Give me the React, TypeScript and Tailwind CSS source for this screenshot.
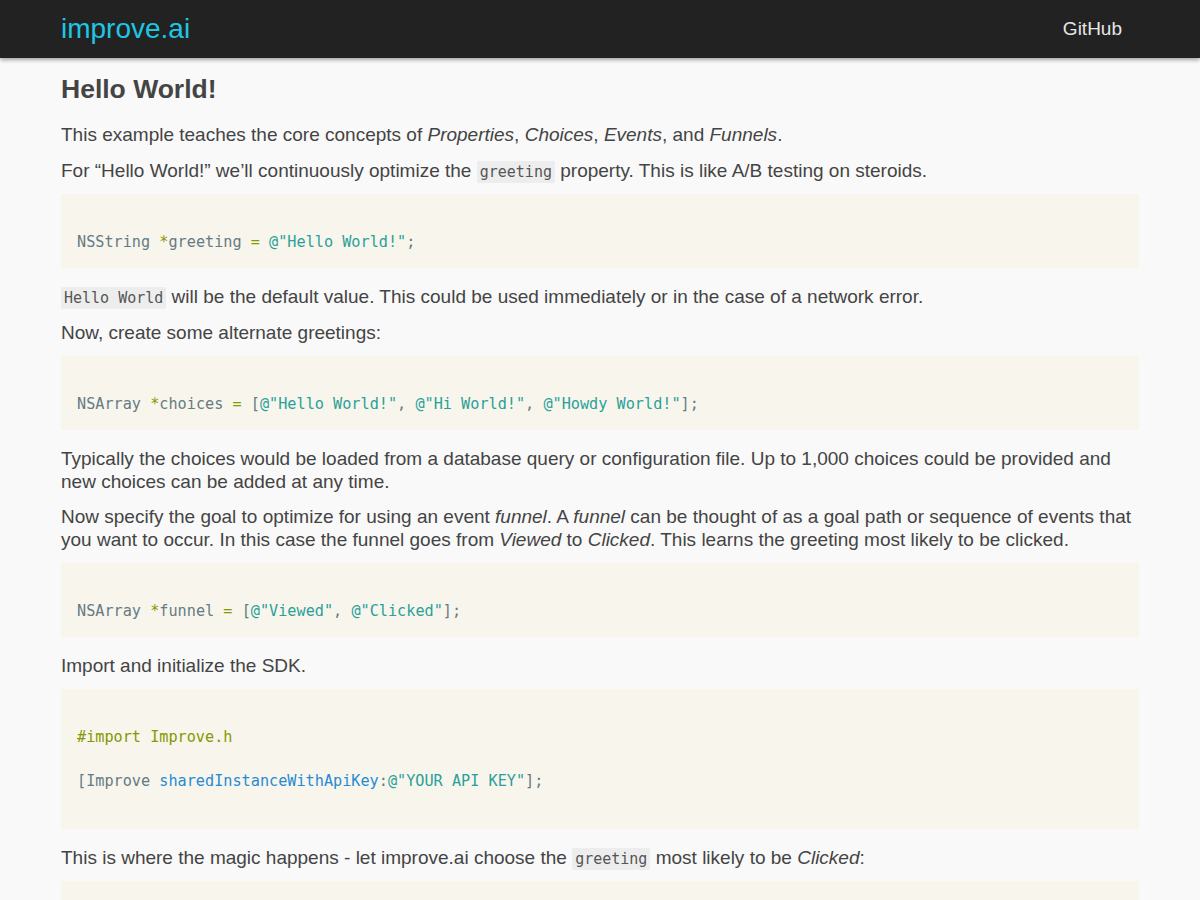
import React from 'react'

const sans = { fontFamily: '"Liberation Sans", Arial, sans-serif' }

function Code({ children }: { children: React.ReactNode }) {
  return (
    <code className="bg-[#ededed] text-[#555] px-[3px] py-[2px] rounded-[2px] text-[15px] leading-[15px] font-['DejaVu_Sans_Mono',monospace]">
      {children}
    </code>
  )
}

function Block({ children }: { children: React.ReactNode }) {
  return (
    <pre className="bg-[#f8f5ed] text-[#657b83] px-4 py-[15px] mt-[-1px] mb-[17px] text-[15.2px] leading-[22px] font-['DejaVu_Sans_Mono',monospace] whitespace-pre overflow-hidden">
      {children}
    </pre>
  )
}

const g = 'text-[#859900]'
const s = 'text-[#2aa198]'
const b = 'text-[#268bd2]'

export default function App() {
  return (
    <div className="min-h-[900px] bg-[#f9f9f9] font-['Liberation_Sans',Arial,sans-serif]" style={sans}>
      {/* Top bar */}
      <header className="h-[58px] bg-[#222222] shadow-[0_2px_4px_rgba(0,0,0,0.35)] relative z-10">
        <div className="w-[1078px] mx-auto h-full flex items-center justify-between">
          <span className="text-[28px] text-[#1fc6e3] leading-none -mt-[1px]">improve.ai</span>
          <span className="text-[19px] text-[#e6e6e6] mr-[17px]">GitHub</span>
        </div>
      </header>

      <main className="w-[1078px] mx-auto pt-[14px] text-[#444] text-[19px] leading-[23px]">
        <h1 className="text-[26.5px] leading-[34px] font-bold text-[#444] mb-[17px]">Hello World!</h1>

        <p className="mb-[13px]">
          This example teaches the core concepts of <em>Properties</em>, <em>Choices</em>, <em>Events</em>, and <em>Funnels</em>.
        </p>
        <p className="mb-[13px]">
          For “Hello World!” we’ll continuously optimize the <Code>greeting</Code> property. This is like A/B testing on steroids.
        </p>

        <Block>
          {'\n'}NSString <span className={g}>*</span>greeting <span className={g}>=</span> <span className={s}>@"Hello World!"</span>;
        </Block>

        <p className="mb-[13px]">
          <Code>Hello World</Code> will be the default value. This could be used immediately or in the case of a network error.
        </p>
        <p className="mb-[13px]">Now, create some alternate greetings:</p>

        <Block>
          {'\n'}NSArray <span className={g}>*</span>choices <span className={g}>=</span> [<span className={s}>@"Hello World!"</span>, <span className={s}>@"Hi World!"</span>, <span className={s}>@"Howdy World!"</span>];
        </Block>

        <p className="mb-[12px]">
          Typically the choices would be loaded from a database query or configuration file. Up to 1,000 choices could be provided and new choices can be added at any time.
        </p>
        <p className="mb-[13px]">
          Now specify the goal to optimize for using an event <em>funnel</em>. A <em>funnel</em> can be thought of as a goal path or sequence of events that you want to occur. In this case the funnel goes from <em>Viewed</em> to <em>Clicked</em>. This learns the greeting most likely to be clicked.
        </p>

        <Block>
          {'\n'}NSArray <span className={g}>*</span>funnel <span className={g}>=</span> [<span className={s}>@"Viewed"</span>, <span className={s}>@"Clicked"</span>];
        </Block>

        <p className="mb-[13px]">Import and initialize the SDK.</p>

        <Block>
          {'\n'}<span className={g}>#import Improve.h</span>
          {'\n\n'}[Improve <span className={b}>sharedInstanceWithApiKey</span>:<span className={s}>@"YOUR API KEY"</span>];
          {'\n\n'}
        </Block>

        <p className="mb-[13px]">
          This is where the magic happens - let improve.ai choose the <Code>greeting</Code> most likely to be <em>Clicked</em>:
        </p>

        <Block>
          {'\n'}NSDictionary <span className={g}>*</span>properties <span className={g}>=</span> [Improve choose];
          {'\n\n'}
        </Block>
      </main>
    </div>
  )
}
